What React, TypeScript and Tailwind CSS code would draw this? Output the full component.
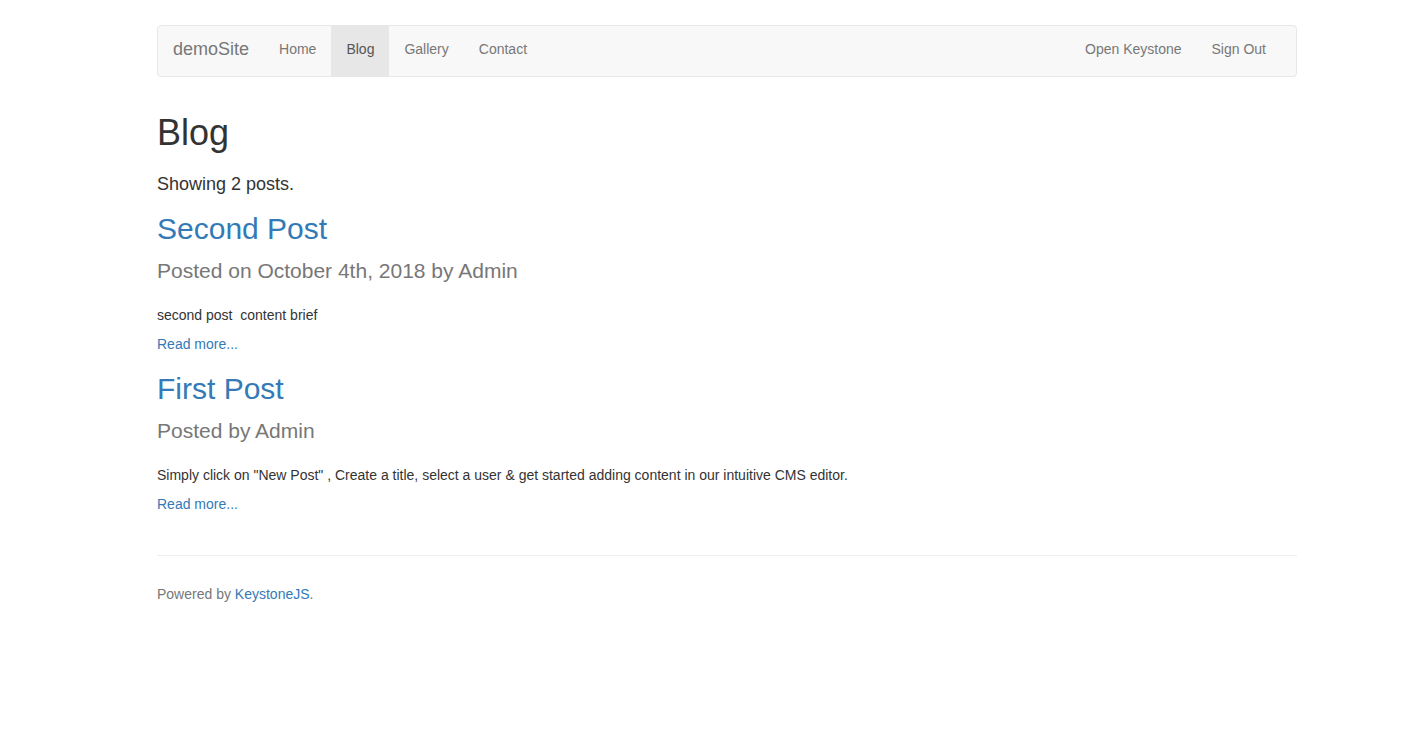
const posts = [
  {
    title: "Second Post",
    meta: "Posted on October 4th, 2018 by Admin",
    brief: "second post\u00a0 content brief",
  },
  {
    title: "First Post",
    meta: "Posted by Admin",
    brief:
      'Simply click on "New Post" , Create a title, select a user & get started adding content in our intuitive CMS editor.',
  },
];

const leftLinks = ["Home", "Blog", "Gallery", "Contact"];
const rightLinks = ["Open Keystone", "Sign Out"];

export default function App() {
  return (
    <div className="min-h-[746px] bg-white font-['Liberation_Sans',Arial,sans-serif] text-[14px] leading-[20px] text-[#333]">
      <div className="ml-[157px] w-[1140px] pt-[25px]">
        {/* Navbar */}
        <nav className="flex h-[52px] items-stretch justify-between rounded-[4px] border border-[#e7e7e7] bg-[#f8f8f8] pr-[15px]">
          <div className="flex items-stretch">
            <a className="px-[15px] pt-[13px] text-[18px] leading-[20px] text-[#777]">
              demoSite
            </a>
            {leftLinks.map((l) => (
              <a
                key={l}
                className={`px-[15px] pt-[13px] ${
                  l === "Blog" ? "bg-[#e7e7e7] text-[#555]" : "text-[#777]"
                }`}
              >
                {l}
              </a>
            ))}
          </div>
          <div className="flex items-stretch">
            {rightLinks.map((l) => (
              <a key={l} className="px-[15px] pt-[13px] text-[#777]">
                {l}
              </a>
            ))}
          </div>
        </nav>

        {/* Content */}
        <h1 className="mt-[36px] text-[36px] leading-[40px] font-normal">Blog</h1>
        <p className="mt-[18px] text-[18px] leading-[26px]">Showing 2 posts.</p>

        {posts.map((p, i) => (
          <div key={p.title} className={i === 0 ? "mt-[15px]" : "mt-[18px]"}>
            <h2 className="text-[30px] leading-[33px] font-normal text-[#337ab7]">
              {p.title}
            </h2>
            <h3 className="mt-[11px] text-[21px] leading-[29px] font-normal text-[#777]">
              {p.meta}
            </h3>
            <p className="mt-[20px]">{p.brief}</p>
            <p className="mt-[9px]">
              <a className="text-[#337ab7]">Read more...</a>
            </p>
          </div>
        ))}

        {/* Footer */}
        <hr className="mt-[41px] border-0 border-t border-[#eee]" />
        <p className="mt-[28px] text-[#777]">
          Powered by <a className="text-[#337ab7]">KeystoneJS</a>.
        </p>
      </div>
    </div>
  );
}
